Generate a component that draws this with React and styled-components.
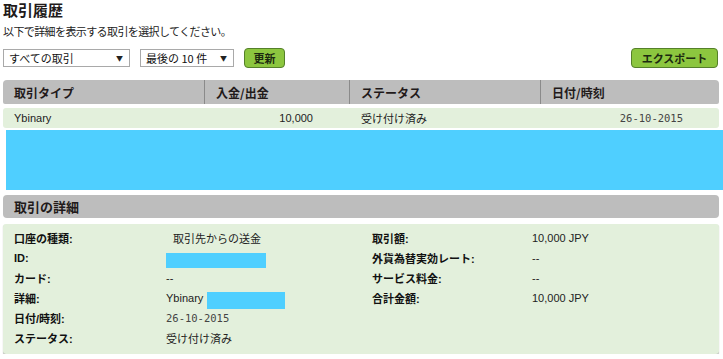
import React from 'react';
import styled, { createGlobalStyle } from 'styled-components';

const GlobalStyle = createGlobalStyle`
  body {
    margin: 0;
    background: #fff;
    font-family: "Liberation Sans", "Noto Sans CJK JP", sans-serif;
    color: #222;
  }
`;

const Page = styled.div`
  width: 716px;
  padding: 0 4px 0 3px;
  overflow: hidden;
`;

const Title = styled.h1`
  margin: 1px 0 0;
  font-size: 15px;
  line-height: 18px;
  font-weight: bold;
  font-family: "Noto Sans CJK JP", sans-serif;
  color: #221a1a;
`;

const Intro = styled.p`
  margin: 5px 0 0;
  font-size: 11px;
  line-height: 14px;
  letter-spacing: -0.6px;
  font-family: "Noto Sans CJK JP", sans-serif;
  color: #222;
`;

const Controls = styled.div`
  display: flex;
  align-items: center;
  gap: 10px;
  margin-top: 10px;
  height: 20px;
`;

const Select = styled.div`
  box-sizing: border-box;
  width: ${(p) => p.$w}px;
  height: 18px;
  display: flex;
  align-items: center;
  justify-content: space-between;
  padding: 0 6px 0 5px;
  border: 1px solid #a9a9a9;
  background: #fff;
  font-size: 11px;
  font-family: "Noto Sans CJK JP", sans-serif;
  color: #111;
`;

const Arrow = styled.span`
  font-size: 7px;
  color: #222;
`;

const Button = styled.button`
  box-sizing: border-box;
  height: 20px;
  width: ${(p) => p.$w}px;
  padding: 0;
  border: 1px solid #55802a;
  border-radius: 4px;
  background: #8cc63f;
  font-size: 11px;
  font-weight: bold;
  font-family: "Noto Sans CJK JP", sans-serif;
  color: #1c2a10;
  cursor: pointer;
  margin-left: ${(p) => (p.$push ? 'auto' : '0')};
  margin-right: ${(p) => (p.$push ? '1px' : '0')};
`;

const cols = '201px 145px 191px 1fr';

const HeaderBar = styled.div`
  display: grid;
  grid-template-columns: ${cols};
  height: 24px;
  margin-top: 12px;
  background: #bdbdbd;
  border-radius: 4px 4px 2px 2px;
`;

const HeaderCell = styled.div`
  display: flex;
  align-items: center;
  padding-left: 11px;
  font-size: 12px;
  font-weight: bold;
  font-family: "Noto Sans CJK JP", sans-serif;
  color: #221a1a;
  border-left: ${(p) => (p.$first ? 'none' : '1px solid #8a8a8a')};
`;

const Row = styled.div`
  display: grid;
  grid-template-columns: ${cols};
  height: 20px;
  margin-top: 4px;
  background: #e3f0dc;
  border-radius: 3px;
  font-size: 11px;
  color: #222;
`;

const Cell = styled.div`
  display: flex;
  align-items: center;
  justify-content: ${(p) => (p.$right ? 'flex-end' : 'flex-start')};
  padding: ${(p) => (p.$right ? '0 36px 0 0' : '0 0 0 11px')};
  font-family: ${(p) =>
    p.$mono ? '"DejaVu Sans Mono", monospace' : '"Liberation Sans", "Noto Sans CJK JP", sans-serif'};
  font-size: ${(p) => (p.$mono ? '10.5px' : '11px')};
  color: ${(p) => (p.$mono ? '#444' : '#222')};
  border-left: ${(p) => (p.$first ? 'none' : '1px solid transparent')};
`;

const Mask = styled.div`
  height: 60px;
  margin: 2px -4px 0 3px;
  background: #4fcfff;
`;

const SectionBar = styled.div`
  height: 23px;
  margin-top: 5px;
  display: flex;
  align-items: center;
  padding-left: 11px;
  background: #bdbdbd;
  border-radius: 4px;
  font-size: 13px;
  font-weight: bold;
  font-family: "Noto Sans CJK JP", sans-serif;
  color: #221a1a;
`;

const Panel = styled.div`
  display: flex;
  height: 130px;
  box-sizing: border-box;
  margin-top: 6px;
  padding: 4px 0 0 11px;
  background: #e3f0dc;
  border-radius: 3px;
  box-shadow: 0 1px 1px #a8a8a8;
`;

const DetailList = styled.div`
  display: grid;
  grid-template-columns: ${(p) => p.$label}px 1fr;
  grid-auto-rows: 20px;
  width: ${(p) => (p.$width ? `${p.$width}px` : 'auto')};
  flex: ${(p) => (p.$width ? 'none' : '1')};
  align-content: start;
`;

const Label = styled.div`
  display: flex;
  align-items: center;
  font-size: 11px;
  font-weight: bold;
  font-family: "Liberation Sans", "Noto Sans CJK JP", sans-serif;
  color: #111;
`;

const Value = styled.div`
  display: flex;
  align-items: center;
  gap: 4px;
  padding-left: ${(p) => p.$indent || 0}px;
  font-size: ${(p) => (p.$mono ? '10.5px' : '11px')};
  font-family: ${(p) =>
    p.$mono ? '"DejaVu Sans Mono", monospace' : '"Liberation Sans", "Noto Sans CJK JP", sans-serif'};
  color: ${(p) => (p.$mono ? '#444' : '#222')};
`;

const Redact = styled.span`
  display: inline-block;
  width: ${(p) => p.$w}px;
  height: ${(p) => p.$h}px;
  background: #4fcfff;
  margin-top: ${(p) => p.$top || 0}px;
`;

export default function App() {
  return (
    <>
      <GlobalStyle />
      <Page>
        <Title>取引履歴</Title>
        <Intro>以下で詳細を表示する取引を選択してください。</Intro>
        <Controls>
          <Select $w={127}>
            <span>すべての取引</span>
            <Arrow>▼</Arrow>
          </Select>
          <Select $w={94}>
            <span>最後の 10 件</span>
            <Arrow>▼</Arrow>
          </Select>
          <Button $w={41}>更新</Button>
          <Button $w={87} $push>エクスポート</Button>
        </Controls>

        <HeaderBar>
          <HeaderCell $first>取引タイプ</HeaderCell>
          <HeaderCell>入金/出金</HeaderCell>
          <HeaderCell>ステータス</HeaderCell>
          <HeaderCell>日付/時刻</HeaderCell>
        </HeaderBar>

        <Row>
          <Cell $first>Ybinary</Cell>
          <Cell $right>10,000</Cell>
          <Cell>受け付け済み</Cell>
          <Cell $right $mono>26-10-2015</Cell>
        </Row>

        <Mask />

        <SectionBar>取引の詳細</SectionBar>

        <Panel>
          <DetailList $label={152} $width={358}>
            <Label>口座の種類:</Label>
            <Value $indent={7}>取引先からの送金</Value>
            <Label>ID:</Label>
            <Value>
              <Redact $w={100} $h={15} $top={4} />
            </Value>
            <Label>カード:</Label>
            <Value>--</Value>
            <Label>詳細:</Label>
            <Value>
              Ybinary
              <Redact $w={78} $h={17} $top={4} />
            </Value>
            <Label>日付/時刻:</Label>
            <Value $mono>26-10-2015</Value>
            <Label>ステータス:</Label>
            <Value>受け付け済み</Value>
          </DetailList>
          <DetailList $label={160}>
            <Label>取引額:</Label>
            <Value>10,000 JPY</Value>
            <Label>外貨為替実効レート:</Label>
            <Value>--</Value>
            <Label>サービス料金:</Label>
            <Value>--</Value>
            <Label>合計金額:</Label>
            <Value>10,000 JPY</Value>
          </DetailList>
        </Panel>
      </Page>
    </>
  );
}
